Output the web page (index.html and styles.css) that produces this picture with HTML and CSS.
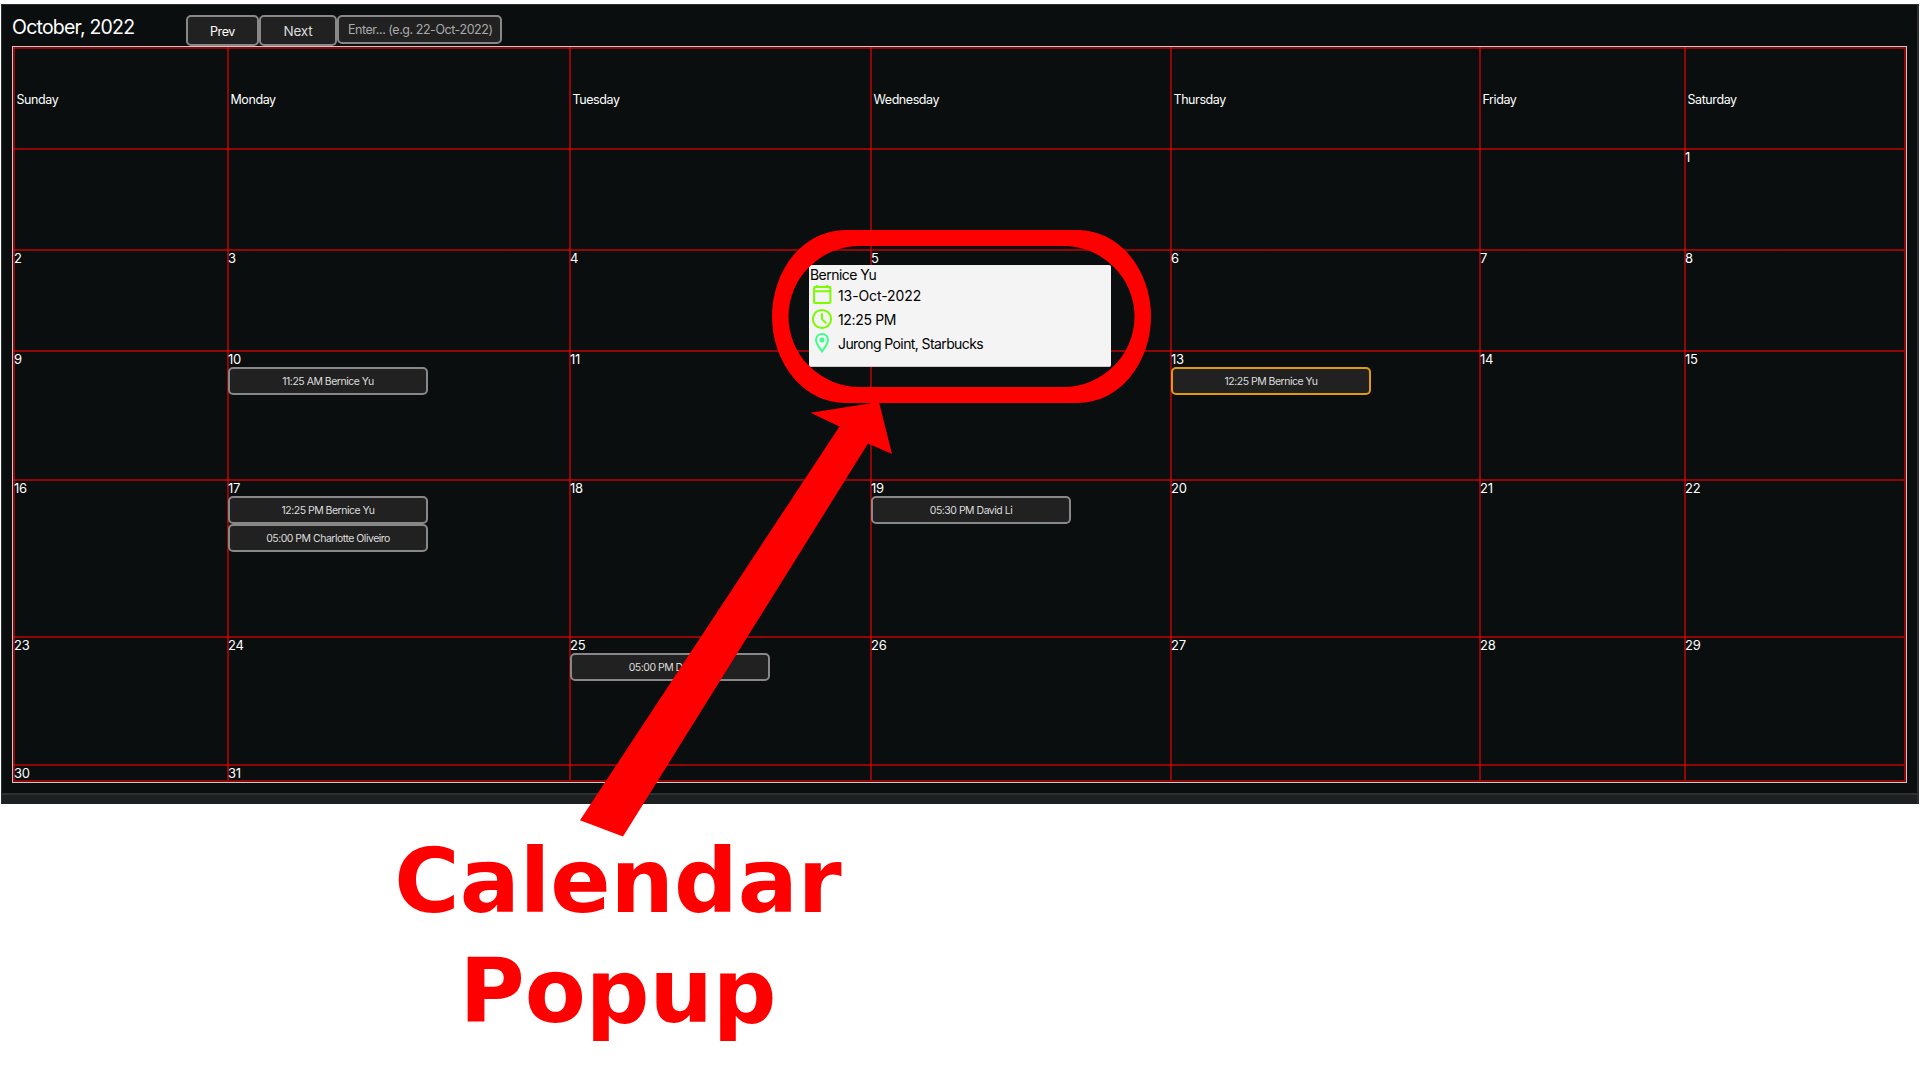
FILE: index.html
```html
<!DOCTYPE html>
<html lang="en">
<head>
<meta charset="utf-8">
<title>Calendar</title>
<link rel="stylesheet" href="styles.css">
</head>
<body>
<main class="app">
  <header class="toolbar">
    <h1 class="month">October, 2022</h1>
    <button class="btn prev">Prev</button>
    <button class="btn next">Next</button>
    <input class="date-input" type="text" placeholder="Enter... (e.g. 22-Oct-2022)">
  </header>
  <section class="calendar">
    <div class="cell head">Sunday</div><div class="cell head">Monday</div><div class="cell head">Tuesday</div><div class="cell head">Wednesday</div><div class="cell head">Thursday</div><div class="cell head">Friday</div><div class="cell head">Saturday</div>
    <div class="cell"></div><div class="cell"></div><div class="cell"></div><div class="cell"></div><div class="cell"></div><div class="cell"></div><div class="cell">1</div>
    <div class="cell">2</div><div class="cell">3</div><div class="cell">4</div><div class="cell">5</div><div class="cell">6</div><div class="cell">7</div><div class="cell">8</div>
    <div class="cell">9</div>
    <div class="cell">10<button class="event">11:25 AM Bernice Yu</button></div>
    <div class="cell">11</div><div class="cell">12</div>
    <div class="cell">13<button class="event active">12:25 PM Bernice Yu</button></div>
    <div class="cell">14</div><div class="cell">15</div>
    <div class="cell">16</div>
    <div class="cell">17<button class="event">12:25 PM Bernice Yu</button><button class="event">05:00 PM Charlotte Oliveiro</button></div>
    <div class="cell">18</div>
    <div class="cell">19<button class="event">05:30 PM David Li</button></div>
    <div class="cell">20</div><div class="cell">21</div><div class="cell">22</div>
    <div class="cell">23</div><div class="cell">24</div>
    <div class="cell">25<button class="event">05:00 PM David Li</button></div>
    <div class="cell">26</div><div class="cell">27</div><div class="cell">28</div><div class="cell">29</div>
    <div class="cell">30</div><div class="cell">31</div><div class="cell"></div><div class="cell"></div><div class="cell"></div><div class="cell"></div><div class="cell"></div>
  </section>
  <footer class="statusbar"></footer>
</main>

<aside class="popup">
  <div class="popup-name">Bernice Yu</div>
  <div class="popup-row date">
    <svg class="icon lime" viewBox="0 0 22 22"><rect x="3" y="3" width="16.4" height="16" rx="1"/><path d="M3 7.300h16.400M6.200 1v2M16.200 1v2"/></svg>
    <span>13-Oct-2022</span>
  </div>
  <div class="popup-row time">
    <svg class="icon lime" viewBox="0 0 22 22"><circle cx="11" cy="11" r="9.1"/><path d="M11 5.200v6l4.200 4.200"/></svg>
    <span>12:25 PM</span>
  </div>
  <div class="popup-row place">
    <svg class="icon mint" viewBox="0 0 22 22"><path d="M11 2C7.300 2 5 4.700 5 7.900C5 11.300 8.500 16 11 19.500C13.500 16 17 11.300 17 7.900C17 4.700 14.700 2 11 2Z"/><circle class="dot" cx="11" cy="8" r="2.5"/></svg>
    <span>Jurong Point, Starbucks</span>
  </div>
</aside>

<svg class="marker" viewBox="0 0 1920 1080">
  <path fill-rule="evenodd" d="M845 230H1078A73 86.500 0 0 1 1078 403H845A73 86.500 0 0 1 845 230ZM860 246A71.500 70.500 0 0 0 860 387H1063A71.500 70.500 0 0 0 1063 246Z"/>
  <path d="M879 402L810.500 412.700L839.500 426.500L580 820.300L623 836.500L868 443.500L892 454Z"/>
</svg>
<p class="caption">Calendar<br>Popup</p>
</body>
</html>
```
FILE: styles.css
```css
* { box-sizing: border-box; }

body {
  margin: 0;
  height: 1080px;
  padding: 4px 1px 0;
  background: #fff;
  font-family: Inter, "Liberation Sans", sans-serif;
  overflow: hidden;
}

.app {
  display: flex;
  flex-direction: column;
  height: 800px;
  border: 1px solid #2c2e2f;
  border-bottom: 0;
  border-right-width: 2px;
  background: #0a0e0f;
  color: #fff;
}

.toolbar {
  display: flex;
  align-items: flex-start;
  height: 41px;
  padding: 10px 0 0 10px;
}

.month {
  width: 174px;
  margin: 0;
  font-size: 19.5px;
  font-weight: 400;
  line-height: 25px;
  letter-spacing: -0.78px;
}

.btn,
.date-input,
.event {
  border: 2px solid #888;
  border-radius: 5px;
  background: #212121;
  color: #fff;
  font-family: inherit;
}

.btn {
  height: 31px;
  padding: 1px 0 0;
  font-size: 13px;
  letter-spacing: -0.4px;
}

.prev { width: 73px; font-size: 12.5px; }
.next { width: 78px; color: #ddd; font-size: 13.5px; letter-spacing: -0.2px; }

.date-input {
  width: 165px;
  height: 29px;
  padding: 0 7px 0 9px;
  font-size: 12.5px;
  letter-spacing: -0.45px;
}

.date-input::placeholder { color: #aaa; opacity: 1; }

.calendar {
  --line: rgba(255, 0, 0, 0.55);
  display: grid;
  grid-template-columns: 214px 342px 301px 300px 309px 205px 222px;
  grid-template-rows: 101px 101px 101px 129px 157px 128px 18px;
  width: 1895px;
  height: 737px;
  margin-left: 10px;
  border: 1px solid #c8c8c8;
}

.cell {
  display: flex;
  flex-direction: column;
  align-items: flex-start;
  min-height: 0;
  padding: 2px 0 0 1px;
  background-image: linear-gradient(var(--line), var(--line)), linear-gradient(var(--line), var(--line));
  background-size: 2px 100%, 100% 2px;
  background-repeat: no-repeat;
  font-size: 13px;
  line-height: 15px;
  letter-spacing: -0.3px;
}

.cell:nth-child(7n) { border-right: 2px solid #910606; }
.cell:nth-child(n+43) { border-bottom: 2px solid #910606; }

.head {
  justify-content: center;
  padding: 4px 0 0 3.5px;
  font-size: 12.5px;
  letter-spacing: -0.42px;
}

.event {
  flex: none;
  width: 200px;
  height: 28px;
  padding: 0;
  color: #ddd;
  font-size: 10.5px;
  letter-spacing: -0.5px;
}

.event.active { border-color: #e09a10; }

.statusbar {
  height: 11px;
  margin-top: auto;
  border-top: 2px solid #303030;
  background: #1c2023;
}

.popup {
  position: absolute;
  left: 809px;
  top: 265px;
  width: 302px;
  height: 102px;
  border-bottom: 1px solid #ccc;
  border-radius: 2px;
  background: #f4f4f4;
  color: #000;
  font-size: 14px;
  letter-spacing: -0.55px;
}

.popup-name { height: 18px; padding: 1px 0 0 1px; line-height: 18px; }

.popup-row {
  display: flex;
  align-items: center;
  gap: 5px;
  height: 24px;
  padding-left: 2px;
}

.date { letter-spacing: -0.1px; }
.time { letter-spacing: -0.35px; }
.place { letter-spacing: -0.6px; }

.icon { width: 22px; height: 22px; fill: none; stroke-width: 2; }
.lime { stroke: #7cfc00; }
.mint { stroke: #3dff8b; }
.dot { fill: #3dff8b; stroke: none; }

.marker {
  position: absolute;
  inset: 0;
  width: 1920px;
  height: 1080px;
  fill: #f00;
}

.caption {
  position: absolute;
  left: 368px;
  top: 826px;
  width: 500px;
  margin: 0;
  color: #f00;
  font: bold 89px/110px "DejaVu Sans", sans-serif;
  text-align: center;
}
```
